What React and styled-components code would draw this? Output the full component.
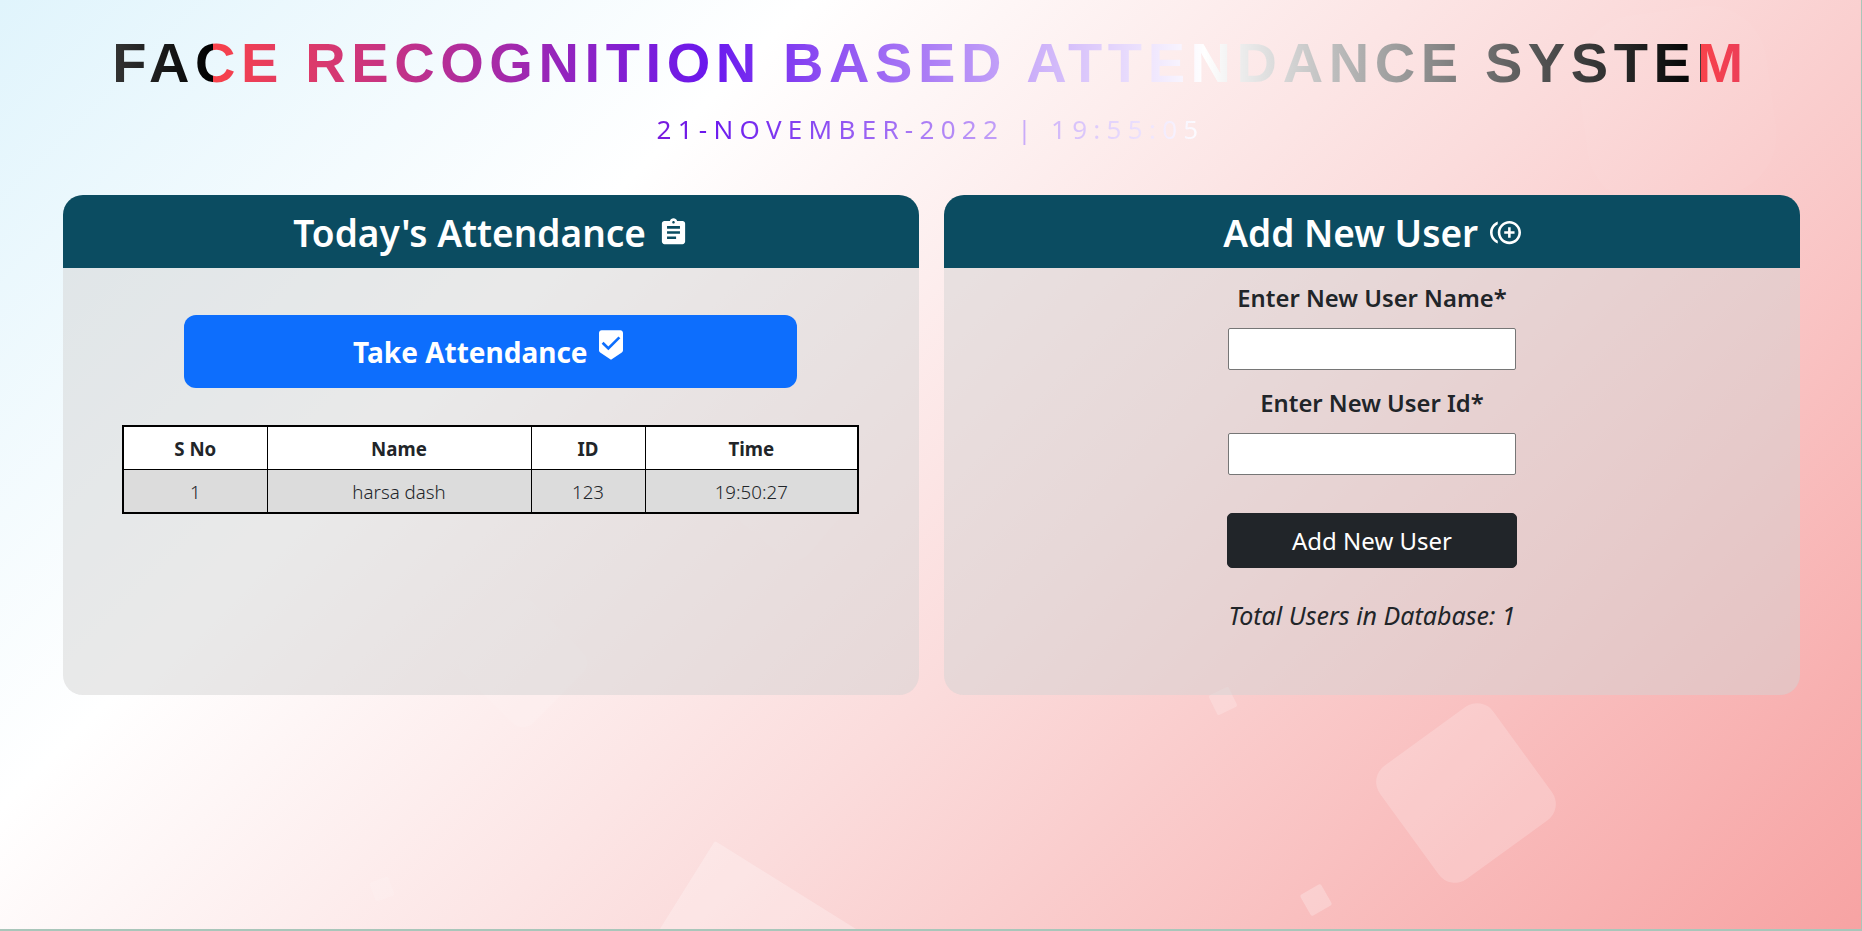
import React from 'react'
import styled, { createGlobalStyle } from 'styled-components'
import { MdAssignment, MdControlPointDuplicate, MdBeenhere } from 'react-icons/md'

const GlobalStyle = createGlobalStyle`
    html {
        height: 931px;
        background: #a9c6ba;
    }
    body {
        margin: 0;
        height: 931px;
        overflow: hidden;
        font-family: "Noto Sans", "Open Sans", sans-serif;
        color: #212529;
    }
    * { box-sizing: border-box; }
`
const Page = styled.div`
    position: relative;
    width: 1861px;
    height: 929px;
    overflow: hidden;
    background: linear-gradient(135deg, #e0f4fc 0%, #ffffff 29%, #fbdcdc 58%, #f7a3a3 100%);
`
const Bubble = styled.span`
    position: absolute;
    left: ${p => p.$x}px;
    top: ${p => p.$y}px;
    width: ${p => p.$size}px;
    height: ${p => p.$size}px;
    transform: rotate(${p => p.$rot}deg);
    border-radius: ${p => p.$radius || 0}px;
    background: rgba(255, 255, 255, ${p => p.$alpha});
`
const Content = styled.div`
    position: relative;
    padding-top: 27px;
`
const gradient = `
    background: linear-gradient(90deg, #f8424a, #6a18ee, #ffffff, #000000);
    background-size: 1488px 100%;
    background-position: 213px 0;
    background-clip: text;
    -webkit-background-clip: text;
    color: transparent;
`
const Title = styled.h1`
    margin: 0;
    height: 72px;
    font-family: "Liberation Sans", Arial, sans-serif;
    font-weight: 700;
    font-size: 56px;
    line-height: 72px;
    letter-spacing: 5.6px;
    text-align: center;
    ${gradient}
`
const DateLine = styled.h2`
    margin: 9px 0 0;
    height: 42px;
    font-weight: 400;
    font-size: 26px;
    line-height: 42px;
    letter-spacing: 6.3px;
    text-align: center;
    ${gradient}
`
const Cards = styled.div`
    display: grid;
    grid-template-columns: 856px 856px;
    gap: 25px;
    margin: 45px 0 0 63px;
`
const Card = styled.section`
    height: 500px;
    border-radius: 20px;
    overflow: hidden;
    background: rgba(211, 211, 211, 0.5);
    text-align: center;
`
const CardHeader = styled.h2`
    margin: 0;
    height: 73px;
    background: #0b4c61;
    color: #fff;
    font-size: 37px;
    font-weight: 600;
    line-height: 75px;
    svg {
        font-size: 31px;
        vertical-align: -1px;
        margin-left: 2px;
    }
`
const AttendanceBody = styled.div`
    padding: 47px 61px 0 59px;
`
const TakeButton = styled.a`
    display: block;
    width: 613px;
    height: 73px;
    margin: 0 auto 37px;
    border-radius: 12px;
    background: #0d6efd;
    color: #fff;
    font-size: 28px;
    font-weight: 700;
    line-height: 75px;
    svg {
        font-size: 32px;
        vertical-align: 2px;
    }
`
const Table = styled.table`
    width: 735px;
    table-layout: fixed;
    border-collapse: collapse;
    border: 2px solid #000;
    font-size: 18.7px;
    th, td {
        padding: 2px 0 0;
        border: 1px solid #000;
        text-align: center;
    }
    th {
        height: 43px;
        background: #fff;
        font-weight: 700;
    }
    td {
        height: 44px;
        background: #dcdcdc;
        font-weight: 300;
    }
`
const UserForm = styled.form`
    display: flex;
    flex-direction: column;
    align-items: center;
    padding-top: 15px;
`
const FieldLabel = styled.label`
    font-size: 23.8px;
    font-weight: 600;
    line-height: 30px;
    margin-bottom: 15px;
`
const TextField = styled.input`
    width: 288px;
    height: 42px;
    padding: 0 2px;
    margin-bottom: 18px;
    background: #fff;
    border: 1px solid #767676;
    border-radius: 2px;
    font-size: 16px;
`
const SubmitButton = styled.button`
    width: 290px;
    height: 55px;
    margin-top: 20px;
    border: 1px solid #212529;
    border-radius: 5px;
    background: #212529;
    color: #fff;
    font-family: inherit;
    font-size: 24px;
`
const TotalUsers = styled.h5`
    margin: 32px 0 0;
    font-size: 25px;
    font-weight: 400;
    font-style: italic;
    line-height: 30px;
`

const bubbles = [
    { x: 1396, y: 723, size: 140, rot: -36, radius: 20, alpha: 0.2 },
    { x: 1212, y: 690, size: 22, rot: -26, radius: 2, alpha: 0.2 },
    { x: 1304, y: 888, size: 24, rot: -30, radius: 2, alpha: 0.25 },
    { x: 657, y: 873, size: 170, rot: 32, radius: 2, alpha: 0.25 },
    { x: 372, y: 879, size: 20, rot: -20, radius: 2, alpha: 0.12 },
    { x: 1582, y: 10, size: 190, rot: -8, radius: 60, alpha: 0.04 },
    { x: 473, y: 613, size: 100, rot: 45, radius: 15, alpha: 0.1 },
    { x: 732, y: 430, size: 115, rot: 40, radius: 20, alpha: 0.08 },
]

const rows = [{ no: 1, name: 'harsa dash', id: 123, time: '19:50:27' }]

export default function App() {
    return (
        <Page>
            <GlobalStyle />
            {bubbles.map((b, i) => (
                <Bubble key={i} $x={b.x} $y={b.y} $size={b.size} $rot={b.rot} $radius={b.radius} $alpha={b.alpha} />
            ))}
            <Content>
                <Title>FACE RECOGNITION BASED ATTENDANCE SYSTEM</Title>
                <DateLine>21-NOVEMBER-2022 | 19:55:05</DateLine>
                <Cards>
                    <Card>
                        <CardHeader>Today's Attendance <MdAssignment /></CardHeader>
                        <AttendanceBody>
                            <TakeButton>Take Attendance <MdBeenhere /></TakeButton>
                            <Table>
                                <colgroup>
                                    <col width="144" />
                                    <col width="264" />
                                    <col width="114" />
                                    <col width="213" />
                                </colgroup>
                                <thead>
                                    <tr><th>S No</th><th>Name</th><th>ID</th><th>Time</th></tr>
                                </thead>
                                <tbody>
                                    {rows.map(r => (
                                        <tr key={r.no}><td>{r.no}</td><td>{r.name}</td><td>{r.id}</td><td>{r.time}</td></tr>
                                    ))}
                                </tbody>
                            </Table>
                        </AttendanceBody>
                    </Card>
                    <Card>
                        <CardHeader>Add New User <MdControlPointDuplicate /></CardHeader>
                        <UserForm>
                            <FieldLabel>Enter New User Name*</FieldLabel>
                            <TextField type="text" />
                            <FieldLabel>Enter New User Id*</FieldLabel>
                            <TextField type="text" />
                            <SubmitButton type="button">Add New User</SubmitButton>
                            <TotalUsers>Total Users in Database: 1</TotalUsers>
                        </UserForm>
                    </Card>
                </Cards>
            </Content>
        </Page>
    )
}
